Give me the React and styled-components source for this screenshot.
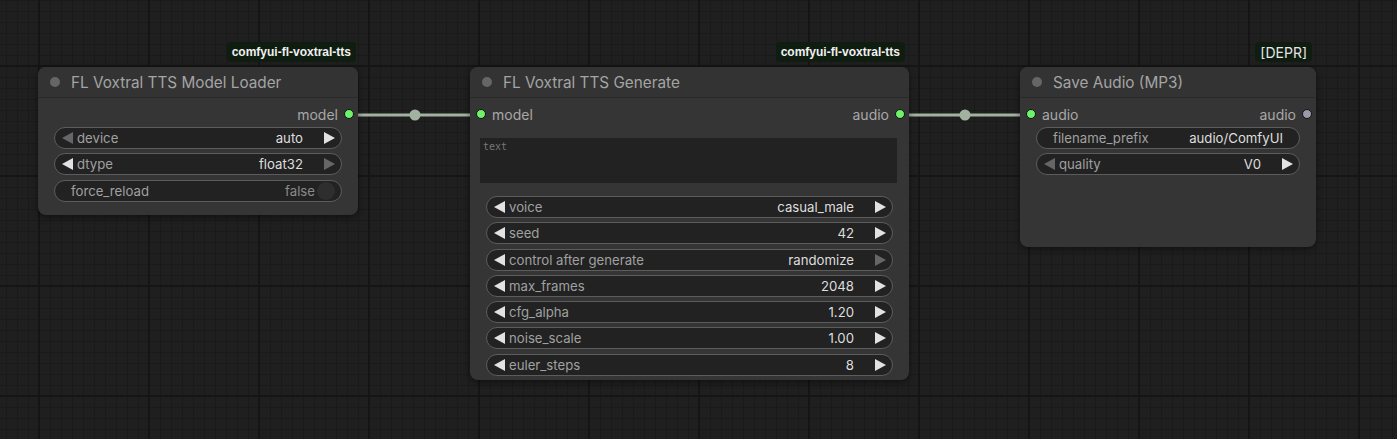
import styled, { createGlobalStyle, css } from "styled-components";

const GlobalStyle = createGlobalStyle`
  html, body {
    margin: 0;
    padding: 0;
    background: #1e1e1e;
    overflow: hidden;
  }
  * { box-sizing: border-box; }
`;

const Canvas = styled.div`
  position: relative;
  width: 1397px;
  height: 439px;
  overflow: hidden;
  font-family: Inter, "Liberation Sans", Arial, sans-serif;
  background-color: #1f1f1f;
  background-image:
    linear-gradient(to right, #151515 2px, transparent 2px),
    linear-gradient(to bottom, #151515 2px, transparent 2px),
    linear-gradient(to right, #1a1a1a 1px, transparent 1px),
    linear-gradient(to bottom, #1a1a1a 1px, transparent 1px);
  background-size: 110px 110px, 110px 110px, 11px 11px, 11px 11px;
  background-position: 38px 65px, 38px 65px, 6px 0, 6px 0;
`;

const Links = styled.svg`
  position: absolute;
  inset: 0;
  width: 100%;
  height: 100%;
`;

const Node = styled.div`
  position: absolute;
  left: ${(p) => p.$x}px;
  top: ${(p) => p.$y}px;
  width: ${(p) => p.$w}px;
  height: ${(p) => p.$h}px;
  background: #353535;
  border-radius: 8px;
  box-shadow: 0 2px 6px rgba(0, 0, 0, 0.45);
  display: flex;
  flex-direction: column;
`;

const Badge = styled.div`
  position: absolute;
  top: -25px;
  right: ${(p) => p.$right}px;
  height: 20px;
  padding: 0 5px;
  display: flex;
  align-items: center;
  background: #0f1d10;
  border-radius: 4px;
  color: #f0f0f0;
  font-family: "Liberation Sans", Arial, sans-serif;
  font-size: 12px;
  font-weight: 700;
  ${(p) =>
    p.$plain &&
    css`
      font-family: Inter, "Liberation Sans", Arial, sans-serif;
      font-size: 14px;
      font-weight: 400;
      color: #e6e6e6;
    `}
`;

const Header = styled.div`
  height: 31px;
  flex: none;
  display: flex;
  align-items: center;
  gap: 11px;
  padding-left: 12px;
  background: #333;
  border-radius: 8px 8px 0 0;
  border-bottom: 1px solid #2a2a2a;
`;

const HeaderDot = styled.span`
  width: 10px;
  height: 10px;
  border-radius: 50%;
  background: #666;
`;

const Title = styled.span`
  color: #a4a4a4;
  font-size: 15.3px;
`;

const Body = styled.div`
  display: flex;
  flex-direction: column;
  padding: 6px 16px 0;
`;

const SlotRow = styled.div`
  height: 20px;
  margin: 0 -16px;
  display: flex;
  align-items: center;
  justify-content: space-between;
  font-size: 14px;
  color: #a8a8a8;
`;

const Slot = styled.div`
  display: flex;
  align-items: center;
  gap: 6px;
  flex-direction: ${(p) => (p.$out ? "row-reverse" : "row")};
  ${(p) => (p.$out ? "margin-right: 4px;" : "margin-left: 6px;")}
`;

const SlotDot = styled.span`
  width: 10px;
  height: 10px;
  border-radius: 50%;
  background: ${(p) => (p.$on ? "#6ef26a" : "#9a99ab")};
  border: 1px solid #111;
`;

const Widgets = styled.div`
  display: flex;
  flex-direction: column;
  gap: 4.3px;
  margin-top: ${(p) => p.$top || 3}px;
`;

const Pill = styled.div`
  height: 22px;
  display: flex;
  align-items: center;
  background: #222;
  border: 1px solid #5c5c5c;
  border-radius: 11px;
  padding: 0 ${(p) => p.$right ?? 6}px 0 ${(p) => p.$left ?? 7}px;
  font-size: 13.2px;
`;

const Label = styled.span`
  color: #a0a0a0;
  flex: 1;
  margin-left: ${(p) => (p.$plain ? 0 : 4)}px;
  white-space: nowrap;
`;

const Value = styled.span`
  color: ${(p) => (p.$muted ? "#8a8a8a" : "#dedede")};
  margin-right: ${(p) => p.$gap ?? 0}px;
  white-space: nowrap;
`;

const ArrowIcon = styled.svg`
  flex: none;
  width: 11px;
  height: 12px;
  fill: ${(p) => (p.$dim ? "#666" : "#e2e2e2")};
`;

const ToggleKnob = styled.span`
  flex: none;
  width: 18px;
  height: 18px;
  border-radius: 50%;
  background: #2e2e2e;
  margin-left: 2px;
`;

const TextBox = styled.div`
  margin: 14px -4px 0 -6px;
  height: 45px;
  background: #222;
  padding: 3px 3px;
  font-family: "DejaVu Sans Mono", "Liberation Mono", monospace;
  font-size: 10px;
  color: #777;
`;

const Arrow = ({ left, dim }) => (
  <ArrowIcon $dim={dim} viewBox="0 0 11 12">
    {left ? <polygon points="11,0 11,12 0,6" /> : <polygon points="0,0 0,12 11,6" />}
  </ArrowIcon>
);

const Combo = ({ label, value, dimLeft, dimRight }) => (
  <Pill>
    <Arrow left dim={dimLeft} />
    <Label>{label}</Label>
    <Value $gap={21}>{value}</Value>
    <Arrow dim={dimRight} />
  </Pill>
);

const Text = ({ label, value }) => (
  <Pill $left={16} $right={16}>
    <Label $plain>{label}</Label>
    <Value>{value}</Value>
  </Pill>
);

const Toggle = ({ label, value }) => (
  <Pill $left={16} $right={6}>
    <Label $plain>{label}</Label>
    <Value $muted>{value}</Value>
    <ToggleKnob />
  </Pill>
);

const linkColor = "#a2b2a1";

const Link = ({ x1, x2, y }) => (
  <g>
    <line x1={x1} y1={y} x2={x2} y2={y} stroke={linkColor} strokeWidth="3" />
    <circle cx={(x1 + x2) / 2} cy={y} r="5.5" fill={linkColor} />
  </g>
);

const generateParams = [
  ["voice", "casual_male"],
  ["seed", "42"],
  ["control after generate", "randomize", true],
  ["max_frames", "2048"],
  ["cfg_alpha", "1.20"],
  ["noise_scale", "1.00"],
  ["euler_steps", "8"],
];

export default function App() {
  return (
    <>
      <GlobalStyle />
      <Canvas>
        <Links>
          <Link x1={349} x2={481} y={115} />
          <Link x1={900} x2={1030} y={115} />
        </Links>

        <Node $x={38} $y={67} $w={320} $h={148}>
          <Badge $right={2}>comfyui-fl-voxtral-tts</Badge>
          <Header>
            <HeaderDot />
            <Title>FL Voxtral TTS Model Loader</Title>
          </Header>
          <Body>
            <SlotRow>
              <span />
              <Slot $out>
                <SlotDot $on />
                model
              </Slot>
            </SlotRow>
            <Widgets>
              <Combo label="device" value="auto" dimLeft />
              <Combo label="dtype" value="float32" dimRight />
              <Toggle label="force_reload" value="false" />
            </Widgets>
          </Body>
        </Node>

        <Node $x={470} $y={67} $w={439} $h={313}>
          <Badge $right={4}>comfyui-fl-voxtral-tts</Badge>
          <Header>
            <HeaderDot />
            <Title>FL Voxtral TTS Generate</Title>
          </Header>
          <Body>
            <SlotRow>
              <Slot>
                <SlotDot $on />
                model
              </Slot>
              <Slot $out>
                <SlotDot $on />
                audio
              </Slot>
            </SlotRow>
            <TextBox>text</TextBox>
            <Widgets $top={13}>
              {generateParams.map(([label, value, dim]) => (
                <Combo key={label} label={label} value={value} dimRight={dim} />
              ))}
            </Widgets>
          </Body>
        </Node>

        <Node $x={1020} $y={67} $w={296} $h={180}>
          <Badge $plain $right={4}>[DEPR]</Badge>
          <Header>
            <HeaderDot />
            <Title>Save Audio (MP3)</Title>
          </Header>
          <Body>
            <SlotRow>
              <Slot>
                <SlotDot $on />
                audio
              </Slot>
              <Slot $out>
                <SlotDot />
                audio
              </Slot>
            </SlotRow>
            <Widgets>
              <Text label="filename_prefix" value="audio/ComfyUI" />
              <Combo label="quality" value="V0" dimLeft />
            </Widgets>
          </Body>
        </Node>
      </Canvas>
    </>
  );
}
